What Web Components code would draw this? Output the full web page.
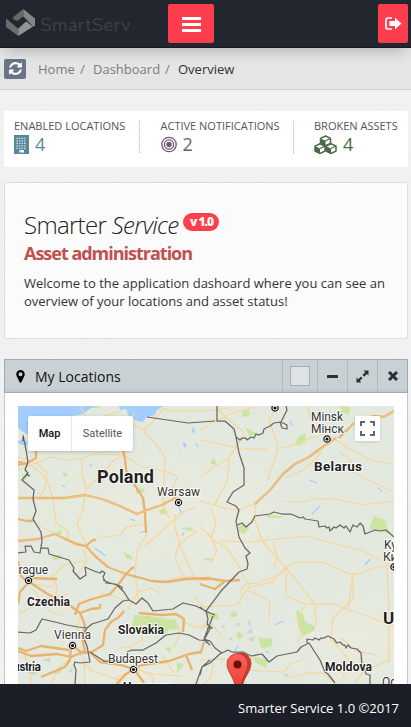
<!DOCTYPE html>
<html lang="en"><head><meta charset="utf-8"><title>Smarter Service</title>
<style>
html,body{margin:0;height:100%;overflow:hidden}
body{font:13px/18px "Open Sans",sans-serif;color:#333}
</style></head><body>
<app-shell>
<top-bar></top-bar>
<crumb-bar></crumb-bar>
<stat-strip>
<stat-item label="ENABLED LOCATIONS" value="4" style="--c:#57889c;width:112px"><svg width="15" height="19" viewBox="0 0 15 19"><path fill="#57889c" d="M0 0h15v19H0z"/><path stroke="#e7f1f5" stroke-width="1.3" stroke-dasharray="1.3 1.25" d="M2.5 3.3h10M2.5 5.8h10M2.5 8.3h10M2.5 10.8h10M2.5 13.3h10"/><path fill="#fff" d="M5.5 15h4.5v2.5H5.5z"/></svg></stat-item>
<stat-item label="ACTIVE NOTIFICATIONS" value="2" style="--c:#6e587a;width:119px"><svg width="16" height="19" viewBox="0 0 16 19"><g fill="none" stroke="#6e587a" stroke-width="1.3"><circle cx="8" cy="9.5" r="7.2"/><circle cx="8" cy="9.5" r="4.6"/></g><circle cx="8" cy="9.5" r="2.7" fill="#6e587a"/></svg></stat-item>
<stat-item label="BROKEN ASSETS" value="4" style="--c:#496949;width:84px"><svg width="23" height="19" viewBox="0 0 23 19"><g fill="#fff" stroke="#496949" stroke-width="1.5" stroke-linejoin="round"><path d="M6.500 3.400 11.500 1l5 2.400v5l-5 2.400-5-2.400z"/><path d="m1 11.100 5-2.400 5 2.400v5l-5 2.400-5-2.400z"/><path d="m12 11.100 5-2.400 5 2.400v5l-5 2.400-5-2.400z"/></g><path fill="#496949" d="m6.500 3.400 5 2.400v5l-5-2.400zM1 11.100l5 2.400v5l-5-2.400zM12 11.100l5 2.400v5l-5-2.400z"/><path fill="none" stroke="#496949" stroke-width="1.1" d="m11 6 5.500-2.500M6 13.500l5-2.400M17 13.500l5-2.400"/></svg></stat-item>
</stat-strip>
<hero-card></hero-card>
<map-widget><span slot="title">My Locations</span><location-map></location-map></map-widget>
<app-footer>Smarter Service 1.0 ©2017</app-footer>
</app-shell>
<script>
const define=(name,html,init)=>customElements.define(name,class extends HTMLElement{
  constructor(){super();this.attachShadow({mode:'open'}).innerHTML=html;}
  connectedCallback(){if(init)init(this,this.shadowRoot);}
});
define('app-shell',`<style>:host{position:relative;display:flex;flex-direction:column;height:727px;width:411px;background:#f2f2f2;overflow:hidden;isolation:isolate}.noise{position:absolute;inset:0;z-index:-1;opacity:.04}</style>
<svg class="noise" width="411" height="727"><filter id="n"><feTurbulence type="fractalNoise" baseFrequency=".55" numOctaves="2"/><feColorMatrix type="saturate" values="0"/></filter><rect width="411" height="727" filter="url(#n)"/></svg><slot></slot>`);
define('top-bar',`<style>:host{display:flex;flex:none;box-sizing:border-box;height:48px;background:#22262e;border-bottom:1px solid #17191f;padding:4px 3px 0 6px;align-items:flex-start;position:relative;z-index:2;box-shadow:0 9px 13px -5px rgba(0,0,0,.2)}
.logo{display:flex;width:162px;height:38px;gap:4px;align-items:center}.logo span{font:18.5px/26px "Nunito","Open Sans",sans-serif;color:#414141;letter-spacing:.25px;padding-top:3px}
button{all:unset;display:flex;align-items:center;justify-content:center;background:#ff3e4d;border-radius:2px;height:39px}.menu{width:46px}.exit{width:30px;margin-left:auto}</style>
<div class="logo"><svg width="30" height="28" viewBox="0 0 30 28"><path fill="#666" d="M7.300 8 17.300 0v7.200l-5.500 4.500-4.500-1z"/><path fill="#858585" d="m17.300 0 11.700 9.500V17l-2 .5L17.300 7.200z"/><path fill="#6c6c6c" d="m0 9.500 12.300 10V27L0 18z"/><path fill="#939393" d="m12.300 19.500 8-7.300 4 3.500L27 17.500 12.300 27z"/></svg><span>SmartServ</span></div>
<button class="menu" aria-label="Menu"><svg width="19" height="16"><path fill="#fff" d="M0 1h19v3H0zm0 6h19v3H0zm0 6h19v3H0z"/></svg></button>
<button class="exit" aria-label="Sign out"><svg width="17" height="13" viewBox="0 0 17 13"><path fill="none" stroke="#fff" stroke-width="1.7" d="M7 1H3Q1 1 1 3v7q0 2 2 2h4"/><path fill="#fff" d="M4.500 4H10V.8l6.500 5.700L10 12.200V9H4.500z"/></svg></button>`);
define('crumb-bar',`<style>:host{display:flex;flex:none;height:41px;background:#e5e5e5;border-bottom:1px solid #cfcfcf;align-items:center;padding-left:4px}
.r{width:22px;height:20px;background:#6a7488;border-radius:2px;display:grid;place-items:center;margin-right:12px}span{color:#7c7c7c;white-space:pre}b{font-weight:400;color:#333}</style>
<div class="r"><svg width="13" height="13" viewBox="0 0 1536 1536"><path fill="#fff" d="M1511 928q0 5-1 7-64 268-268 434.500t-478 166.500q-146 0-282.500-55t-243.500-157l-129 129q-19 19-45 19t-45-19-19-45v-448q0-26 19-45t45-19h448q26 0 45 19t19 45-19 45l-137 137q71 66 161 102t187 36q134 0 250-65t186-179q11-17 53-117 8-23 30-23h192q13 0 22.500 9.500t9.500 22.500zm25-800v448q0 26-19 45t-45 19h-448q-26 0-45-19t-19-45 19-45l138-138q-148-137-349-137-134 0-250 65t-186 179q-11 17-53 117-8 23-30 23h-199q-13 0-22.500-9.500t-9.500-22.500v-7q65-268 270-434.500t480-166.500q146 0 284 55.500t245 156.500l130-129q19-19 45-19t45 19 19 45z"/></svg></div>
<span style="width:42px">Home</span><span style="width:13px">/</span><span style="width:72px">Dashboard</span><span style="width:13px">/</span><b>Overview</b>`);
define('stat-strip',`<style>:host{display:flex;flex:none;box-sizing:border-box;height:56px;margin:21px 3px 0 4px;background:#fff;padding:9px 10px 0}::slotted(:not(:last-child)){border-right:1px dotted #b5b5b5;margin-right:20.500px;padding-right:13px}</style><slot></slot>`);
define('stat-item',`<style>:host{display:block;height:33px;white-space:nowrap}.l{font-size:11px;line-height:12px;color:#555}.v{display:flex;gap:6px;height:22px;align-items:center;color:var(--c);font-size:18px;line-height:20px;padding-top:1px}::slotted(svg){flex:none}</style><div class="l"></div><div class="v"><slot></slot><span></span></div>`,(e,r)=>{r.querySelector('.l').textContent=e.getAttribute('label');r.querySelector('span').textContent=e.getAttribute('value');});
define('hero-card',`<style>:host{display:block;flex:none;box-sizing:border-box;height:157px;margin:15px 3px 0 4px;background:#fbfbfb;border:1px solid #ddd;border-radius:2px;padding:28px 19px 0;color:#333}
h1{display:flex;margin:0;font:300 24px/28px "Open Sans",sans-serif;letter-spacing:-.68px;white-space:pre;color:#222}em{font-weight:300}.b{font:800 12px/18px "Open Sans",sans-serif;letter-spacing:-1px;color:#fff;background:#ff3e4d;border-radius:9px;width:36px;height:18px;text-align:center;margin:2px 0 0 5px}
h2{margin:0;font:700 18px/28px "Open Sans",sans-serif;letter-spacing:-1.010px;color:#c0504d}p{margin:7px 0 0;line-height:18px;white-space:nowrap}</style>
<h1><span>Smarter <em>Service</em></span><span class="b">v 1.0</span></h1><h2>Asset administration</h2><p>Welcome to the application dashoard where you can see an<br>overview of your locations and asset status!</p>`);
define('map-widget',`<style>:host{display:flex;flex-direction:column;flex:1;min-height:0;margin:20px 3px 0 4px}
header{display:flex;flex:none;box-sizing:border-box;height:34px;background:linear-gradient(#c9d1d4 92%,#bec7cd 93%);border:1px solid #9eabb2;align-items:center;padding-left:11px;font-size:14px;color:#111}.t{flex:1;margin:2px 0 0 10px}
i{display:grid;place-items:center;align-self:stretch;border-left:1px solid #b0bbc0;width:29px}.c{width:34px}.c:before{content:"";width:18px;height:18px;background:#dde2e4;border:1px solid #a8b0b5}
.body{flex:1;min-height:0;background:#fff;border:solid #c6c6c6;border-width:0 1px;padding:13px 13px 0;overflow:hidden}</style>
<header><svg width="9" height="13" viewBox="0 0 9 13"><path fill="#000" fill-rule="evenodd" d="M4.500 0a4.200 4.200 0 0 1 4.200 4.200c0 1.500-.5 2.200-.8 2.800L5.500 12q-1 1.500-2 0L1.100 7C.8 6.400.3 5.700.3 4.200A4.200 4.200 0 0 1 4.500 0zm0 2.200a2 2 0 1 0 0 4 2 2 0 0 0 0-4z"/></svg><div class="t"><slot name="title"></slot></div><i class="c"></i>
<i><svg width="11" height="3"><rect width="11" height="3" rx=".6" fill="#263238"/></svg></i><i><svg width="13" height="13" viewBox="0 0 13 13"><path fill="#263238" d="M7.500.5h5v5L10.900 4 8.200 6.700 6.500 5 9.200 2.200zM.5 7.500 2.200 9.200 5 6.500 6.500 8 3.800 10.900l1.700 1.600h-5z"/></svg></i><i><svg width="10" height="10" viewBox="0 0 10 10"><path stroke="#263238" stroke-width="3" d="m1 1 8 8M9 1 1 9"/></svg></i></header><div class="body"><slot></slot></div>`);
define('app-footer',`<style>:host{display:flex;flex:none;box-sizing:border-box;height:43px;background:#1c1f27;color:#fff;align-items:center;justify-content:flex-end;padding:5px 12px 0 0;position:relative;z-index:3}</style><slot></slot>`);

const mapSvg=`<svg width="376" height="278" viewBox="18 406 376 278">
<defs><linearGradient id="pin" x2="0" y2="1"><stop stop-color="#fc6058"/><stop offset="1" stop-color="#ea4035"/></linearGradient><g id="city"><circle r="3.100" fill="#fff" stroke="#111" stroke-width="1.200"/><circle r="1.600" fill="#111"/></g>
<radialGradient id="shade"><stop stop-color="#e9ebdd"/><stop offset="1" stop-color="#e9ebdd" stop-opacity="0"/></radialGradient><filter id="terrain" x="0" y="0" width="100%" height="100%"><feTurbulence type="fractalNoise" baseFrequency=".12" numOctaves="4"/><feColorMatrix values="0 0 0 0 .5 0 0 0 0 .58 0 0 0 0 .5 1.500 0 0 0 -.68"/></filter></defs>
<path fill="#e3e9df" d="M18 406h376v278H18z"/>
<ellipse cx="150" cy="510" rx="140" ry="70" fill="url(#shade)"/><ellipse cx="235" cy="520" rx="60" ry="80" fill="url(#shade)"/><ellipse cx="140" cy="675" rx="130" ry="35" fill="url(#shade)"/><ellipse cx="350" cy="640" rx="100" ry="60" fill="url(#shade)"/>
<path filter="url(#terrain)" opacity=".05" d="M18 406h376v278H18z"/>
<g fill="#a3ccff"><path d="M18 406H100L91 408 83 414 66 417 46 424 37 438 27 434 20 430 18 427zM119 406h44l-7 5-1 4-8 2-5 5-7-2-6-3-3-8-6 1z"/><path d="M18 441l6-2 4 4-2 3-8-3zM192 427l3 4-1 3-2-3zM183 442l4 3-3 3z"/></g>
<g stroke="#a3ccff" stroke-width="1.200" fill="none"><path d="m196 443 2 4M90 464l2 2M179 505l2 8M62 485l3 2M95 548l11 8M125 555l7 3M140 533l5-2M182 528l9 2M309 480l8 3M378 487l4 5M312 514l8-8M290 421l2 5M354 419l6 5M80 656l4-6M238 646l-3 5M250 626l-1-6M275 625l8-4M130 519l5 2M370 559l-5 6M182 536l2-4"/></g>
<g fill="#c9e5a0"><path d="m340 406 10 1-1 8-7-2zM243 410l7 1-2 6-6-1zM245 427l13 7 1 2-10-1zM298 437l8-4-1 9-7 4-3-3zM211 460l4-1 1 6-5-1zM136 488l8 1 1 3-9 2zM159 510l6-1 2 5-6 1zM184 528l6-1 4 3-7 1zM124 552l6 3 3 5-7-2zM58 530l4 1-1 4-5-1zM266 515l18 1-3 2-14 0zM374 516l12 5 1 8 5 6-15-5-8-1zM239 524l11 4-6 6-6-2zM204 558l10 1-1 2-9-1zM207 613l10 0 3 7-10-2zM296 610l7 4 2 8 11 5-3 4-10 5-5-9zM230 613l5-2 3 5-7 2zM238 631l5 4-3 4-4-3zM252 656l16 4-2 8-10-5zM258 637l6 2 3-1 6 1-2 8-10 1zM134 615l16 1 12 2 14 2 2 9-17 1-12-6-17 3zM155 628l14 2-3 4-11-1zM165 648l7-1-3 6zM177 662l7 3-7 8zM23 474l5 2-2 4-4-2zM64 472l4 2-2 3-4-2zM52 556l10-1-2 4-7 1zM93 407l7-1-1 3z"/></g>
<g fill="#bbc8b4" opacity=".55"><path d="m235 625 3-3 2 5zM246 632l7-4-2 6zM248 639l8-3-4 6zM228 640l3-3 2 4zM221 627l3-3 1 5zM264 652l4-2 1 4zM283 675l5-2-1 5zM26 672l7-4 7 3-6 4zM43 660l8-3-1 5zM50 673l12-4-3 5zM68 672l4-5 1 6z"/></g>
<g fill="none" stroke="#f7d59c" stroke-width="1.250" stroke-linejoin="round">
<path d="M80 407l4 7 2 3M134 412l-3 11 12 7 10 11 8 10 4 8-1 25-2 5 2 18 5 11M143 430l8-6 13-16 6 3 30 0 30-3M121 411l-17 5-9 3M124 455l-30-1-12 4-14 2-18-3-32 13M82 458l0 16 4 15-4 25-5 10 8 17 2 7M86 489l16-15 12-14 12-6M125 456l15 10 25 5 13 6M177 477l-5 14 4 5-4 5M18 457l20 7 9 9-2 16-6 8M30 464l16 14 7 20 3 25 12 8 0 9M35 525l20 8M100 538l20-3 7-8 16-3"/>
<path d="M183 512l12-5M183 513l-16 13-18 17-5 2M175 514l0 14 6 20 9 20 9 16M197 531l-18 13-4 14 9 20M147 533l-10 18-2 22 4 30M200 501l27 8 10 1 20-7M257 503l-2 5 0 7-5 8M200 430l15-9 20-9 20-5M216 408l20 18 7 5 0 6M275 409l-6 12 8 20 0 12-10 28M200 440l20 4 20 5 28 0M276 449l15-3 20-8 9-2M243 437l-15 22-14 8-14 10M230 455l-3 26-13 25M286 478l17-8 10-8 8-10M333 438l20 13 20 10 20 3M326 438l-13-12-6-20M340 452l10 8 3 12 20 10 19 9M283 501l18 1 15-3 20 0 26 6 15-2 17-2M255 520l7 20 12 15 12 12M221 541l30 1 28-3 27-3 33 9 22 5 30 16M286 567l11-5 25 0 28 12 10 0 13-6 20-3M286 567l-8 8-20 8-13 1-4 6 1 7M213 540l14 8 9 13 13 25M200 527l11 10 6 13-7 14M211 508l5 15-5 16M273 541l4 15-3 11M353 573l0 25-20 20-3 23"/>
<path d="M247 588l25-6 14-14 0 28 18 8 11 0 20 0 14 6 12 4 33 12M353 573l-5 36M247 590l23 11-1 19M247 590l-10 15-33 2-10-10M286 568l7 8 22 28 1 21M200 660l25-1 22 11 15 1 22 1 6-8 15-5M387 568l2 42 0 52M389 660l-25 11-10 12M305 605l-7 13 4 15-5 10M341 638l15 13 20 4M332 640l17 20 12 7M259 652l-6 7-10 4-4 10 8 11M200 629l10-5 7 6 5 7M289 678l20-5 15 0 10 9M213 663l-2 15-8 6M335 661l10 18"/>
<path d="M53 579l4 8-2 14 18 5 5 7M28 583l25 4M128 610l10-18 13-4 10 6M80 617l-3 9 6 17M145 619l-4 9 1 12-13 7-10 1M132 599l-10 0-21-6M77 575l10-14-4-12M164 582l10-4 13-1 23 1M49 580l15-15 21-4M184 622l13 6 13-5M19 614l30-17 20-3M33 589l14 20 13 6M74 655l-16 14-7 15M84 658l1 26M84 663l10 9 14 4 12 4M20 648l10 18 1 18M134 669l-16 8-2 7M138 669l15 8 0 7M134 669l20 5 27 2M147 655l-12 8M174 648l6-16-3-9M163 656l4 8 8 9"/>
</g>
<g fill="none" stroke="#e9b26e" stroke-width="2.300" stroke-linejoin="round"><path d="M123 450l2 9 1 10 1 5 9 13 7 11 2 15 1 20M18 498l47 0 20-3 17 4 18 7 17 8 10-4 15-5 15-8M18 519l9 2 8 0M18 541l20-2 17-5 21 10 10 2 7-6 3 0M86 546l10 11 12 10 18 7-8 11-8 9-21 6-10 4-4 11M126 574l5-5 3-2M126 574l26 7 14 1 20-3 24-1M255 504l16-15 12-15 12-10 14-7 15-11 12-8M339 438l14-14 20-8 11 1 10-6M28 582l-7-6-3-15M31 578l26 1M28 583l-8 9-2 12M28 581l18 12 23 12 11 8 5 12-3 13 3 13-14 6-14-3-26 2-13-5M80 613l11-4 9-1 0-4M72 645l10 8 10-1 11-7 2-15 6-8 8-5 5-6M90 652l10 10 21 3 12 4 9-4 27-4 20-7 12-2 3-10M133 669l-8 6-8 9M134 669l10 14M71 645l-1 15-5 7-24 10M18 648l8 3 15-5 28 4M139 613l23 2 14-1 8 5-1 13M186 655l6 15M240 580l-15 1-12-2-13 0M200 584l15 5 9-7M18 465l9-2 9-5 0-8M18 462l10 2"/></g>
<g fill="none" stroke="#f4d094" stroke-width=".7"><path d="M18 498l47 0 20-3 17 4 18 7 17 8 25-9 15-8M18 541l20-2 17-5 31 12 22 20 18 8M255 504l16-15 12-15 12-10 14-7 27-19 17-14 31-7 10-6"/></g>
<g fill="none" stroke="#666" stroke-width="1.250" stroke-linejoin="round"><path d="m23 435 3 15 2 12-3 8 3 3-6 7 12 10-1 9 3 12-3 8 8 13 1 9-2 12-6-1-3-6-6 0 1 6-8 1M41 548l7 0 1 6 20 6 5 8-1 3 7 8 6-4-1-8 9 4 6 2 2-2 3 2-2 4 3 6 9 1 7 3 0 3M103 580l7 3 7 2 7 7 5 8 7 4 6-6 6 5 5 8 20-2 10-6 13 3 14 7M18 632l12 1 6-3 6-11 13 3 12 3 11 2 9 1 5-4 16-5 7-11 8-7 6-1M87 628l-4 8 4 10 3 16-10 1-5-1-1 3 2 5-1 14M90 652l14 9 24 0-1-9 5-2 11 0 13-7 10-8 13-2 10 2 10 5 10 1M210 629l-6 11 6 5M210 660l-8 7-6 17M147 417l41 6 27-2M217 406l0 15 8 0 9 8 2 8 3 16 5 15 0 17-11 7-6 10 9 4 3 4-3 11 3 16 6 11 5 5-4 3 2 8-1 5-8 3-18 19-15 20 2 8-1 5 5 4-5 0M200 607l5 4 10 4M213 616l-9 23 6 2 5 7 7 5 6-3 4 2 11 0 8 4 11-2 7 8 8-6 20-4 4-5 8-4 11 17 5 12 3 2 7 9M307 643l0-4 6 1 2-2 4 2 2-2 3 0 4-2 6 3 3 4 3-1 3 3 2 0 1 3 2-3 3 3 6 1 4 4 1 13 3 4 1 4 4 1 0 9M221 653l-11 10-8 4-2 8M236 437l4 3 2-2 4 0 1 2 4-3 3 1 2-4 3 1 4-2 1-4 6-3 4-3 7-1 6-12-1-4M280 422l2 6 5 1 0-4-6-3M237 525l5-2 4 4 6-5 3-6 15-2 4-2 8 2 9 0 9 4 3-1 2 2 13 2 1 6 6-1 2 2 2-1 1 4 4-4 2 1 4-3 4 3 2-2 4 6 3-7 4 2 3-4 3 3 2 8 5-2 5-2 5 1 6-1 8 7"/></g>
<path d="m23 437 0 4M30 476l-4-2" stroke="#333"/>
<use href="#city" x="275" y="408"/><use href="#city" x="327" y="439"/><use href="#city" x="178.500" y="502.500"/><use href="#city" x="28.500" y="580.500"/><use href="#city" x="72.500" y="645.500"/><use href="#city" x="133.500" y="669.500"/><use href="#city" x="394" y="567"/>
<g font-family="Roboto,sans-serif" font-size="12" fill="#333" stroke="#fff" stroke-opacity=".8" stroke-width="2" paint-order="stroke"><text x="311" y="421" textLength="32">Minsk</text><text x="311" y="433" textLength="33">Мінск</text><text x="157" y="496" textLength="43">Warsaw</text><text x="11" y="574" textLength="37">Prague</text><text x="54" y="639" textLength="37">Vienna</text><text x="108" y="663" textLength="50">Budapest</text><text x="384" y="549">Kyiv</text><text x="383" y="561">Київ</text><text x="382" y="686">Odesa</text>
<g font-weight="700" fill="#222"><text x="97" y="483" font-size="18" textLength="57">Poland</text><text x="314" y="471" font-size="13.500" textLength="48">Belarus</text><text x="27" y="605.500" textLength="43">Czechia</text><text x="118" y="633.500" textLength="46">Slovakia</text><text x="6" y="671" textLength="35">Austria</text><text x="325" y="670.500" textLength="47">Moldova</text><text x="383" y="624" font-size="17">Ukraine</text><text x="123" y="691">Hungary</text></g></g>
<g stroke="#b52e25" stroke-width=".8"><path fill="#cd3b33" d="M241 684c-1-7-10-12-10-21a10 10 0 0 1 20 0c0 9-7 14-8 21z"/><path fill="url(#pin)" d="M236 690c-1-12-9-18-9-26a10.500 10.500 0 0 1 21 0c0 8-7 14-8 26z"/></g><circle cx="237.500" cy="664.500" r="4" fill="#6c120e"/>
</svg>`;
define('location-map',`<style>:host{display:block;position:relative;height:278px;overflow:hidden;font:11px/35px Roboto,sans-serif}svg{display:block}.types{position:absolute;left:10px;top:10px;display:flex;height:35px;background:#fff;border-radius:2px;box-shadow:0 1px 4px -1px #0005}.types span{width:61px;text-align:center;color:#565656}.types b{width:43px;text-align:center;color:#111;font-weight:500;border-right:1px solid #e7e7e7}.full{position:absolute;right:14px;top:10px;width:25px;height:25px;background:#fff;display:grid;place-items:center;box-shadow:0 1px 4px -1px #0003}</style>${mapSvg}<div class="types"><b>Map</b><span>Satellite</span></div><div class="full"><svg width="15" height="15"><path fill="none" stroke="#666" stroke-width="2" d="M5 1H1v4M10 1h4v4M5 14H1v-4M10 14h4v-4"/></svg></div>`);
</script></body></html>
